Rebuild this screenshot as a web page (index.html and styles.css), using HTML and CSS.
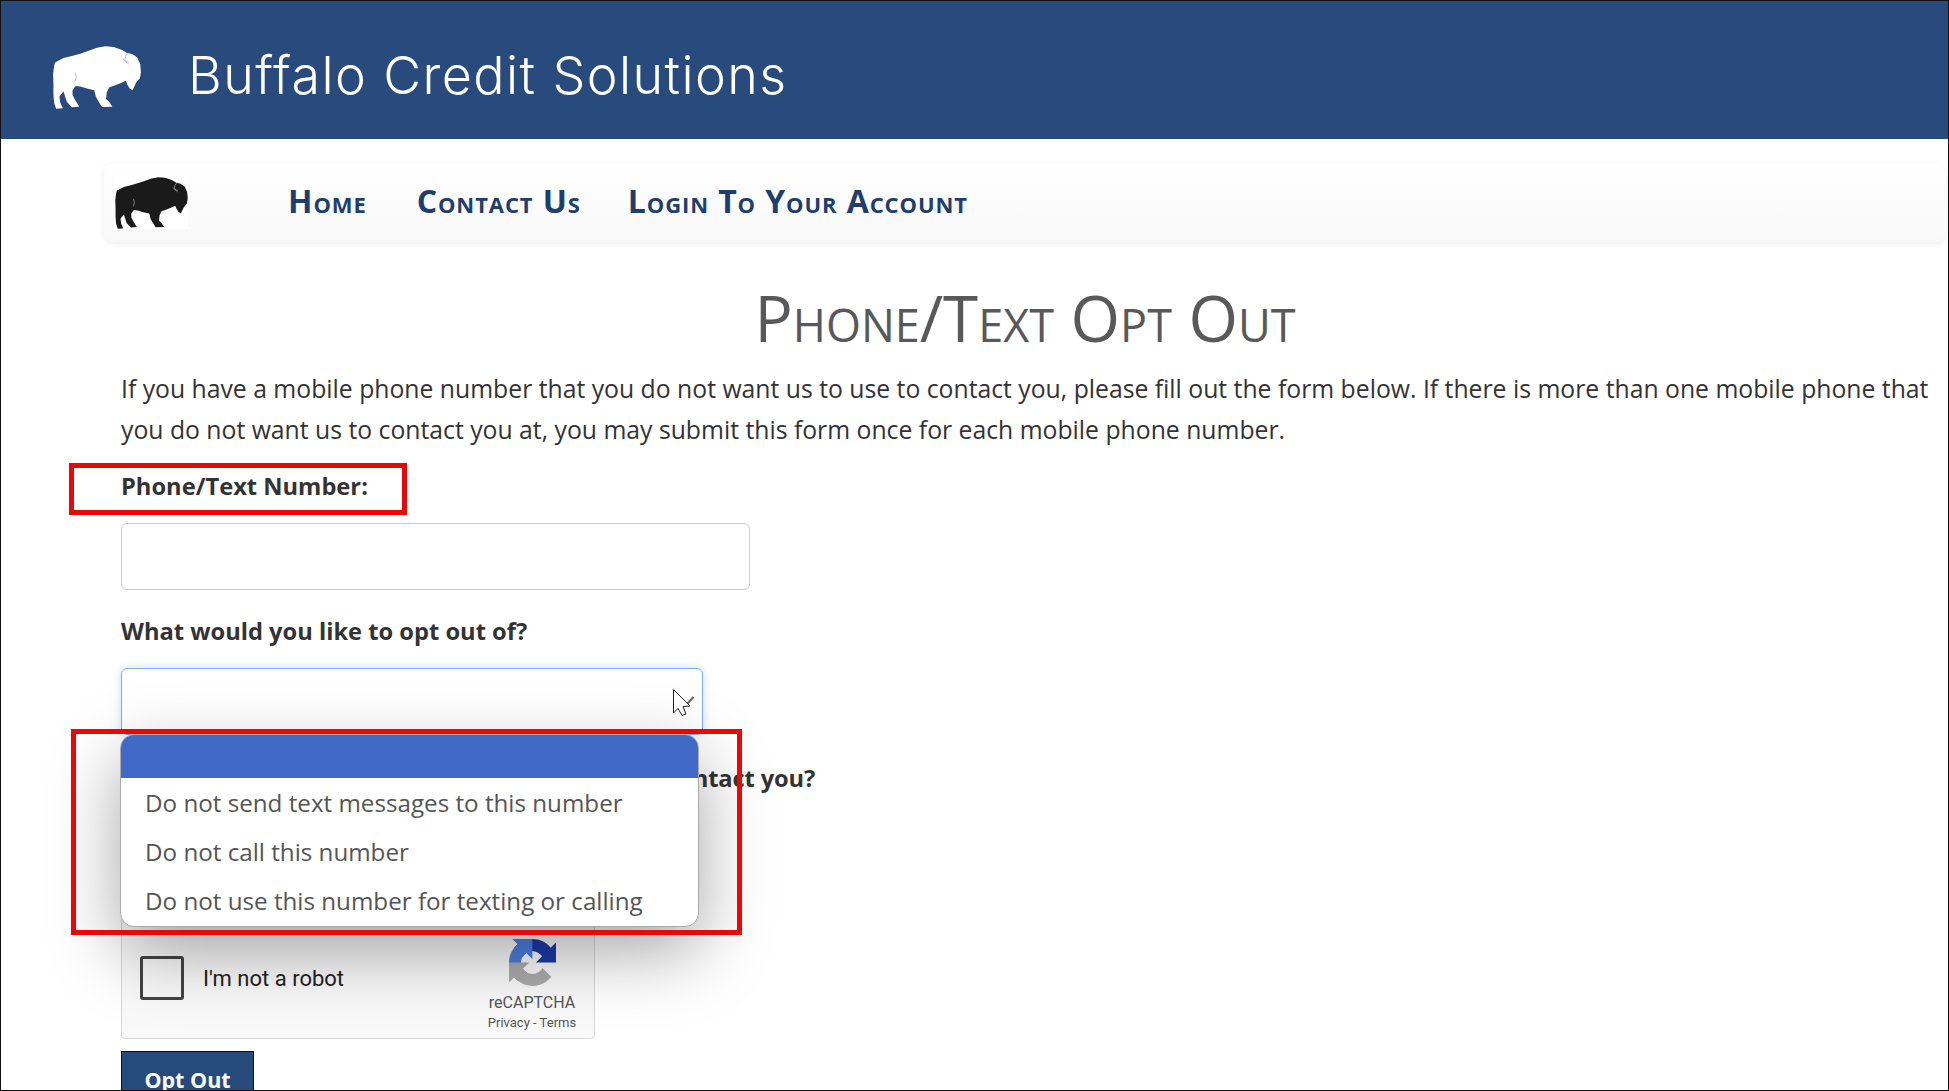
FILE: index.html
```html
<!DOCTYPE html>
<html lang="en">
<head>
  <meta charset="UTF-8" />
  <title>Phone/Text Opt Out</title>
  <link rel="stylesheet" href="styles.css">
</head>
<body>
  <svg class="defs" width="0" height="0">
    <symbol id="bison" viewBox="68 46 264 188">
      <path class="bison-body" d="M75 95 L100 82 L125 76 L150 69 L175 60 L200 51 L225 47 L250 49 L275 58 L290 67 L305 70 L320 80 L329 100 L331 125 L328 142 L317 155 L306 178 L297 172 L290 160 L286 150 L270 157 L252 164 L236 170 L229 185 L227 204 L236 212 L246 227 L215 228 L205 212 L196 196 L192 178 L170 173 L150 167 L136 165 L127 178 L127 192 L134 206 L147 227 L125 229 L110 212 L100 182 L88 196 L90 214 L98 232 L78 233 L72 215 L70 190 L70 160 L69 130 L72 105 Z" />
      <path class="bison-line" d="M293 65 Q272 88 295 100 M278 84 Q284 96 295 94 M135 125 Q142 138 134 152" />
    </symbol>
  </svg>

  <header class="site-header">
    <svg class="bison bison--white"><use href="#bison" /></svg>
    <span class="site-header--title">Buffalo Credit Solutions</span>
  </header>

  <nav class="site-nav">
    <div class="site-nav--logo"><svg class="bison bison--black"><use href="#bison" /></svg></div>
    <a href="#">Home</a>
    <a href="#">Contact Us</a>
    <a href="#">Login To Your Account</a>
  </nav>

  <main class="page">
    <h1 class="page--title">Phone/Text Opt Out</h1>
    <p class="page--intro">If you have a mobile phone number that you do not want us to use to contact you, please fill out the form below. If there is more than one mobile phone that you do not want us to contact you at, you may submit this form once for each mobile phone number.</p>

    <form class="optout">
      <label class="optout--label" for="phone">Phone/Text Number:</label>
      <input class="optout--input" id="phone" type="text" />

      <label class="optout--label optout--label-second">What would you like to opt out of?</label>
      <div class="select">
        <div class="select--box"></div>
        <svg class="cursor" viewBox="0 0 21 27" width="21" height="27">
          <path d="M20.5 8 L14 15" fill="none" stroke="#666" stroke-width="2" />
          <path d="M0.5 0.5 V24 L5 19.5 L9 26.5 L13 25 L10 17.5 L17 17 Z" fill="#fff" stroke="#222" stroke-width="1" stroke-linejoin="round" />
        </svg>
        <ul class="select--menu">
          <li class="is-active"></li>
          <li>Do not send text messages to this number</li>
          <li>Do not call this number</li>
          <li>Do not use this number for texting or calling</li>
        </ul>
      </div>

      <label class="optout--label optout--label-third">Is there another way that you would like us to contact you?</label>

      <div class="captcha">
        <span class="captcha--check"></span>
        <span class="captcha--text">I'm not a robot</span>
        <div class="captcha--brand">
          <svg class="captcha--logo" viewBox="0 0 64 64">
            <path d="M64 31.955l-.033-1.37V4.687l-7.16 7.16C50.948 4.674 42.033.093 32.05.093c-10.4 0-19.622 4.96-25.458 12.64l11.736 11.86a15.55 15.55 0 0 1 4.754-5.333c2.05-1.6 4.952-2.906 8.968-2.906.485 0 .86.057 1.135.163 4.976.393 9.288 3.14 11.828 7.124l-8.307 8.307 32.29.007" fill="#1c3aa9" />
            <path d="M31.862.094l-1.37.033H4.594l7.16 7.16C4.58 13.147 0 22.06 0 32.046c0 10.4 4.96 19.622 12.64 25.458l11.86-11.736a15.55 15.55 0 0 1-5.333-4.754c-1.6-2.05-2.906-4.952-2.906-8.968 0-.485.057-.86.163-1.135.393-4.976 3.14-9.288 7.124-11.828l8.307 8.307L31.862.094" fill="#4c7fe0" />
            <path d="M.001 32.045l.033 1.37v25.898l7.16-7.16c5.86 7.173 14.774 11.754 24.76 11.754 10.4 0 19.622-4.96 25.458-12.64l-11.736-11.86a15.55 15.55 0 0 1-4.754 5.333c-2.05 1.6-4.952 2.906-8.968 2.906-.485 0-.86-.057-1.135-.163-4.976-.393-9.288-3.14-11.828-7.124l8.307-8.307-32.29-.007" fill="#ababab" />
          </svg>
          <span class="captcha--name">reCAPTCHA</span>
          <span class="captcha--links">Privacy - Terms</span>
        </div>
      </div>

      <button class="optout--submit" type="button">Opt Out</button>
    </form>
  </main>

  <!-- red boxes drawn over the page -->
  <div class="mark mark--label"></div>
  <div class="mark mark--menu"></div>
</body>
</html>
```

FILE: styles.css
```css
* { box-sizing: border-box; margin: 0; padding: 0; }

html { background-color: #fff; }

body {
  position: relative;
  height: 1091px;
  overflow: hidden;
  border: 1px solid #111;
  font-family: 'Open Sans', sans-serif;
  color: #333;
  background-color: #fff;
}

.defs { position: absolute; }

.bison-body { fill: currentColor; stroke: none; }
.bison-line { fill: none; stroke-width: 2; }

.bison { display: block; }

.bison--white {
  width: 90px;
  height: 63px;
  margin-top: 4px;
  color: #fff;
  stroke: #8fa6c8;
}

.bison--black {
  width: 73px;
  height: 52px;
  color: #1a1a1a;
  stroke: #ccc;
}

.site-header {
  display: flex;
  align-items: center;
  gap: 46px;
  height: 138px;
  padding: 10px 0 0 51px;
  background-color: #294a7c;
}

.site-header--title {
  font-family: 'Inter', sans-serif;
  font-size: 52px;
  font-weight: 300;
  letter-spacing: 1.4px;
  color: #fff;
}

.site-nav {
  display: flex;
  align-items: center;
  gap: 47px;
  height: 79px;
  margin: 24px 2px 0 103px;
  padding-left: 11px;
  border-radius: 10px;
  background: linear-gradient(#fff, #f8f8f8);
  box-shadow: 0 2px 6px rgba(0,0,0,0.08);
}

.site-nav--logo {
  width: 73px;
  margin-right: 53px;
  background-color: #fff;
}

.site-nav a {
  padding-bottom: 5px;
  font-size: 32px;
  font-weight: 700;
  font-variant: small-caps;
  letter-spacing: 0.9px;
  color: #1f3e6d;
  text-decoration: none;
}

.site-nav a:first-of-type { margin-right: 3px; }

.page { padding: 0 19px 0 120px; }

.page--title {
  margin-top: 38px;
  font-size: 63.7px;
  font-weight: 400;
  font-variant: small-caps;
  line-height: 76px;
  text-align: center;
  color: #595959;
}

.page--intro {
  margin-top: 12px;
  margin-right: -6px;
  font-size: 24.75px;
  line-height: 41px;
}

.optout--label {
  display: block;
  font-size: 23.7px;
  font-weight: 700;
  line-height: 34px;
}

.optout { margin-top: 19px; }

.optout--input {
  display: block;
  width: 629px;
  height: 67px;
  margin-top: 20px;
  border: 1px solid #ccc;
  border-radius: 6px;
  background-color: #fff;
}

.optout--label-second { margin-top: 24px; }

.select {
  position: relative;
  width: 582px;
  height: 67px;
  margin-top: 20px;
}

.select--box {
  height: 100%;
  border: 1px solid #80b0f0;
  border-radius: 6px;
  box-shadow: 0 0 8px rgba(100,160,240,0.35);
  background-color: #fff;
}

.cursor {
  position: absolute;
  top: 21px;
  right: 9px;
}

.select--menu {
  position: absolute;
  z-index: 2;
  top: 66px;
  left: -1px;
  width: 579px;
  height: 193px;
  overflow: hidden;
  list-style: none;
  border: 1px solid #aaa;
  border-radius: 14px;
  background-color: #fff;
  box-shadow: 0 25px 70px rgba(0,0,0,0.35);
}

.select--menu li {
  height: 49px;
  padding-left: 24px;
  font-size: 24.2px;
  line-height: 49px;
  color: #555;
}

.select--menu .is-active {
  height: 43px;
  background-color: #4169c8;
}

.optout--label-third {
  margin-top: 26px;
  letter-spacing: -0.13px;
}

.captcha {
  display: flex;
  align-items: center;
  position: relative;
  width: 474px;
  height: 122px;
  margin-top: 122px;
  padding-left: 18px;
  border: 1px solid #d6d6d6;
  border-radius: 4px;
  background-color: #f9f9f9;
  font-family: 'Roboto', sans-serif;
}

.captcha--check {
  width: 44px;
  height: 44px;
  border: 3px solid #444;
  border-radius: 3px;
}

.captcha--text {
  margin-left: 19px;
  font-size: 22px;
  color: #222;
}

.captcha--brand {
  display: flex;
  flex-direction: column;
  align-items: center;
  position: absolute;
  top: 21px;
  right: 12px;
  width: 100px;
}

.captcha--logo {
  width: 47px;
  height: 47px;
}

.captcha--name {
  font-size: 16px;
  line-height: 22px;
  margin-top: 6px;
  color: #555;
}

.captcha--links {
  font-size: 13px;
  line-height: 18px;
  white-space: nowrap;
  color: #555;
}

.optout--submit {
  display: block;
  width: 133px;
  height: 56px;
  margin-top: 12px;
  border: 1px solid #111;
  background-color: #264a7c;
  font-family: 'Open Sans', sans-serif;
  font-size: 21.5px;
  font-weight: 700;
  color: #fff;
}

.mark {
  position: absolute;
  z-index: 5;
  border: 5px solid #e80808;
}

.mark--label {
  top: 462px;
  left: 68px;
  width: 338px;
  height: 52px;
}

.mark--menu {
  top: 728px;
  left: 70px;
  width: 671px;
  height: 206px;
}
```
